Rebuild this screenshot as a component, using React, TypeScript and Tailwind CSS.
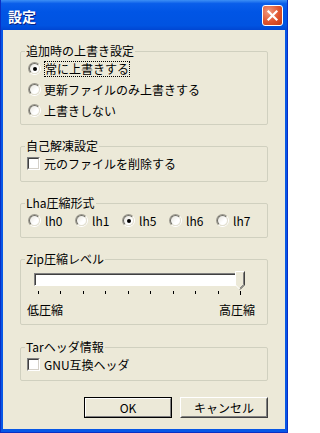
import React from 'react';

const font = "font-['Noto_Sans_CJK_JP',sans-serif]";

function Radio({ checked }: { checked?: boolean }) {
  return (
    <span className="flex h-[13px] w-[13px] shrink-0 rounded-full border border-t-[#9C9A90] border-l-[#9C9A90] border-r-white border-b-white">
      <span className="flex h-full w-full items-center justify-center rounded-full border border-t-[#6E6D66] border-l-[#6E6D66] border-r-[#E3E0D2] border-b-[#E3E0D2] bg-[linear-gradient(135deg,#E6E4DC_0%,#FFFFFF_60%)]">
        {checked && <span className="h-[4px] w-[4px] rounded-full bg-black" />}
      </span>
    </span>
  );
}

function Check() {
  return (
    <span className="flex h-[13px] w-[13px] shrink-0 border border-t-[#808080] border-l-[#808080] border-r-white border-b-white">
      <span className="h-full w-full border border-t-[#404040] border-l-[#404040] border-r-[#D4D0C8] border-b-[#D4D0C8] bg-white" />
    </span>
  );
}

function Group({
  title,
  className,
  children,
}: {
  title: string;
  className?: string;
  children: React.ReactNode;
}) {
  return (
    <fieldset className={`min-w-0 rounded-[2px] border border-[#D0D0BF] ${className ?? ''}`}>
      <legend className="ml-[4px] h-[14px] px-[1px] leading-[14px]">{title}</legend>
      {children}
    </fieldset>
  );
}

function Button({ label, primary }: { label: string; primary?: boolean }) {
  if (primary) {
    return (
      <div className="h-[21px] w-[88px] border border-black">
        <div className="flex h-full w-full items-center justify-center border border-t-white border-l-white border-r-[#808080] border-b-[#808080] leading-none">
          {label}
        </div>
      </div>
    );
  }
  return (
    <div className="h-[21px] w-[88px] border border-t-white border-l-white border-r-[#404040] border-b-[#404040]">
      <div className="flex h-full w-full items-center justify-center border border-t-transparent border-l-transparent border-r-[#808080] border-b-[#808080] leading-none">
        {label}
      </div>
    </div>
  );
}

export default function App() {
  const lhaOptions = ['lh0', 'lh1', 'lh5', 'lh6', 'lh7'];
  const ticks = [0, 1, 2, 3, 4, 5, 6, 7, 8, 9];

  return (
    <div
      className={`flex h-[433px] w-[288px] flex-col border-x border-b border-[#0A2FC4] bg-[#0757E6] text-[12px] text-black ${font}`}
    >
      {/* title bar */}
      <div className="flex h-[30px] shrink-0 items-center justify-between bg-[linear-gradient(180deg,#3D8FF5_0%,#0A5EEA_12%,#0055E5_40%,#0053E1_85%,#0046D2_100%)] pl-[7px] pr-[4px]">
        <span className="pt-[2px] text-[14px] font-bold leading-none text-white [text-shadow:1px_1px_#0A2080]">
          設定
        </span>
        <div className="flex h-[21px] w-[21px] items-center justify-center rounded-[3px] border border-white bg-[radial-gradient(circle_at_30%_30%,#F09A80_0%,#E0542E_55%,#C43A16_100%)]">
          <svg width="13" height="13" viewBox="0 0 13 13">
            <path d="M2.5 2.5 L10.5 10.5 M10.5 2.5 L2.5 10.5" stroke="white" strokeWidth="2.2" strokeLinecap="square" />
          </svg>
        </div>
      </div>

      {/* body */}
      <div className="mx-[2px] mb-[3px] flex flex-1 flex-col bg-[#ECE9D8] px-[17px] pt-[14px]">
        <Group title="追加時の上書き設定" className="pb-[3px]">
          <div className="flex h-[21px] items-center gap-[3px] pl-[7px]">
            <Radio checked />
            <span className="border border-dotted border-black leading-[14px]">常に上書きする</span>
          </div>
          <div className="flex h-[21px] items-center gap-[3px] pl-[7px]">
            <Radio />
            <span className="leading-[14px]">更新ファイルのみ上書きする</span>
          </div>
          <div className="flex h-[21px] items-center gap-[3px] pl-[7px]">
            <Radio />
            <span className="leading-[14px]">上書きしない</span>
          </div>
        </Group>

        <Group title="自己解凍設定" className="mt-[14px] pb-[7px]">
          <div className="flex h-[21px] items-center gap-[4px] pl-[6px]">
            <Check />
            <span className="leading-[14px]">元のファイルを削除する</span>
          </div>
        </Group>

        <Group title="Lha圧縮形式" className="mt-[14px] pb-[6px]">
          <div className="flex h-[21px] items-center pl-[7px]">
            {lhaOptions.map((o) => (
              <div key={o} className="flex w-[47px] items-center gap-[4px]">
                <Radio checked={o === 'lh5'} />
                <span className="leading-[14px]">{o}</span>
              </div>
            ))}
          </div>
        </Group>

        <Group title="Zip圧縮レベル" className="mt-[14px] pb-[7px]">
          <div className="relative ml-[13px] mt-[7px] h-[13px] w-[212px]">
            <div className="h-full w-[206px] border border-t-[#808080] border-l-[#808080] border-r-white border-b-white">
              <div className="h-full w-full border-t border-l border-[#404040] bg-white" />
            </div>
            <svg className="absolute right-[1px] top-[-2px]" width="10" height="19" viewBox="0 0 10 19">
              <path d="M0.5 0.5 H9.5 V14 L5 18.5 L0.5 14 Z" fill="#ECE9D8" />
              <path d="M0.5 14 V0.5 H9" stroke="white" fill="none" />
              <path d="M9.5 0.5 V14 L5 18.5" stroke="#404040" fill="none" />
              <path d="M8.5 1.5 V13.6 L5 17.1" stroke="#808080" fill="none" />
              <path d="M0.5 14 L4.5 18" stroke="white" fill="none" />
            </svg>
          </div>
          <div className="ml-[17px] mt-[5px] flex h-[4px] w-[203px] items-start justify-between">
            {ticks.map((t) => (
              <span key={t} className={`w-px bg-black ${t === 9 ? 'h-[4px]' : 'h-[3px]'}`} />
            ))}
          </div>
          <div className="ml-[6px] mt-[8px] flex w-[228px] justify-between leading-[14px]">
            <span>低圧縮</span>
            <span>高圧縮</span>
          </div>
        </Group>

        <Group title="Tarヘッダ情報" className="mt-[15px] pb-[5px]">
          <div className="flex h-[21px] items-center gap-[4px] pl-[6px]">
            <Check />
            <span className="leading-[14px]">GNU互換ヘッダ</span>
          </div>
        </Group>

        <div className="mt-[16px] flex justify-end gap-[8px]">
          <Button label="OK" primary />
          <Button label="キャンセル" />
        </div>
      </div>
    </div>
  );
}
